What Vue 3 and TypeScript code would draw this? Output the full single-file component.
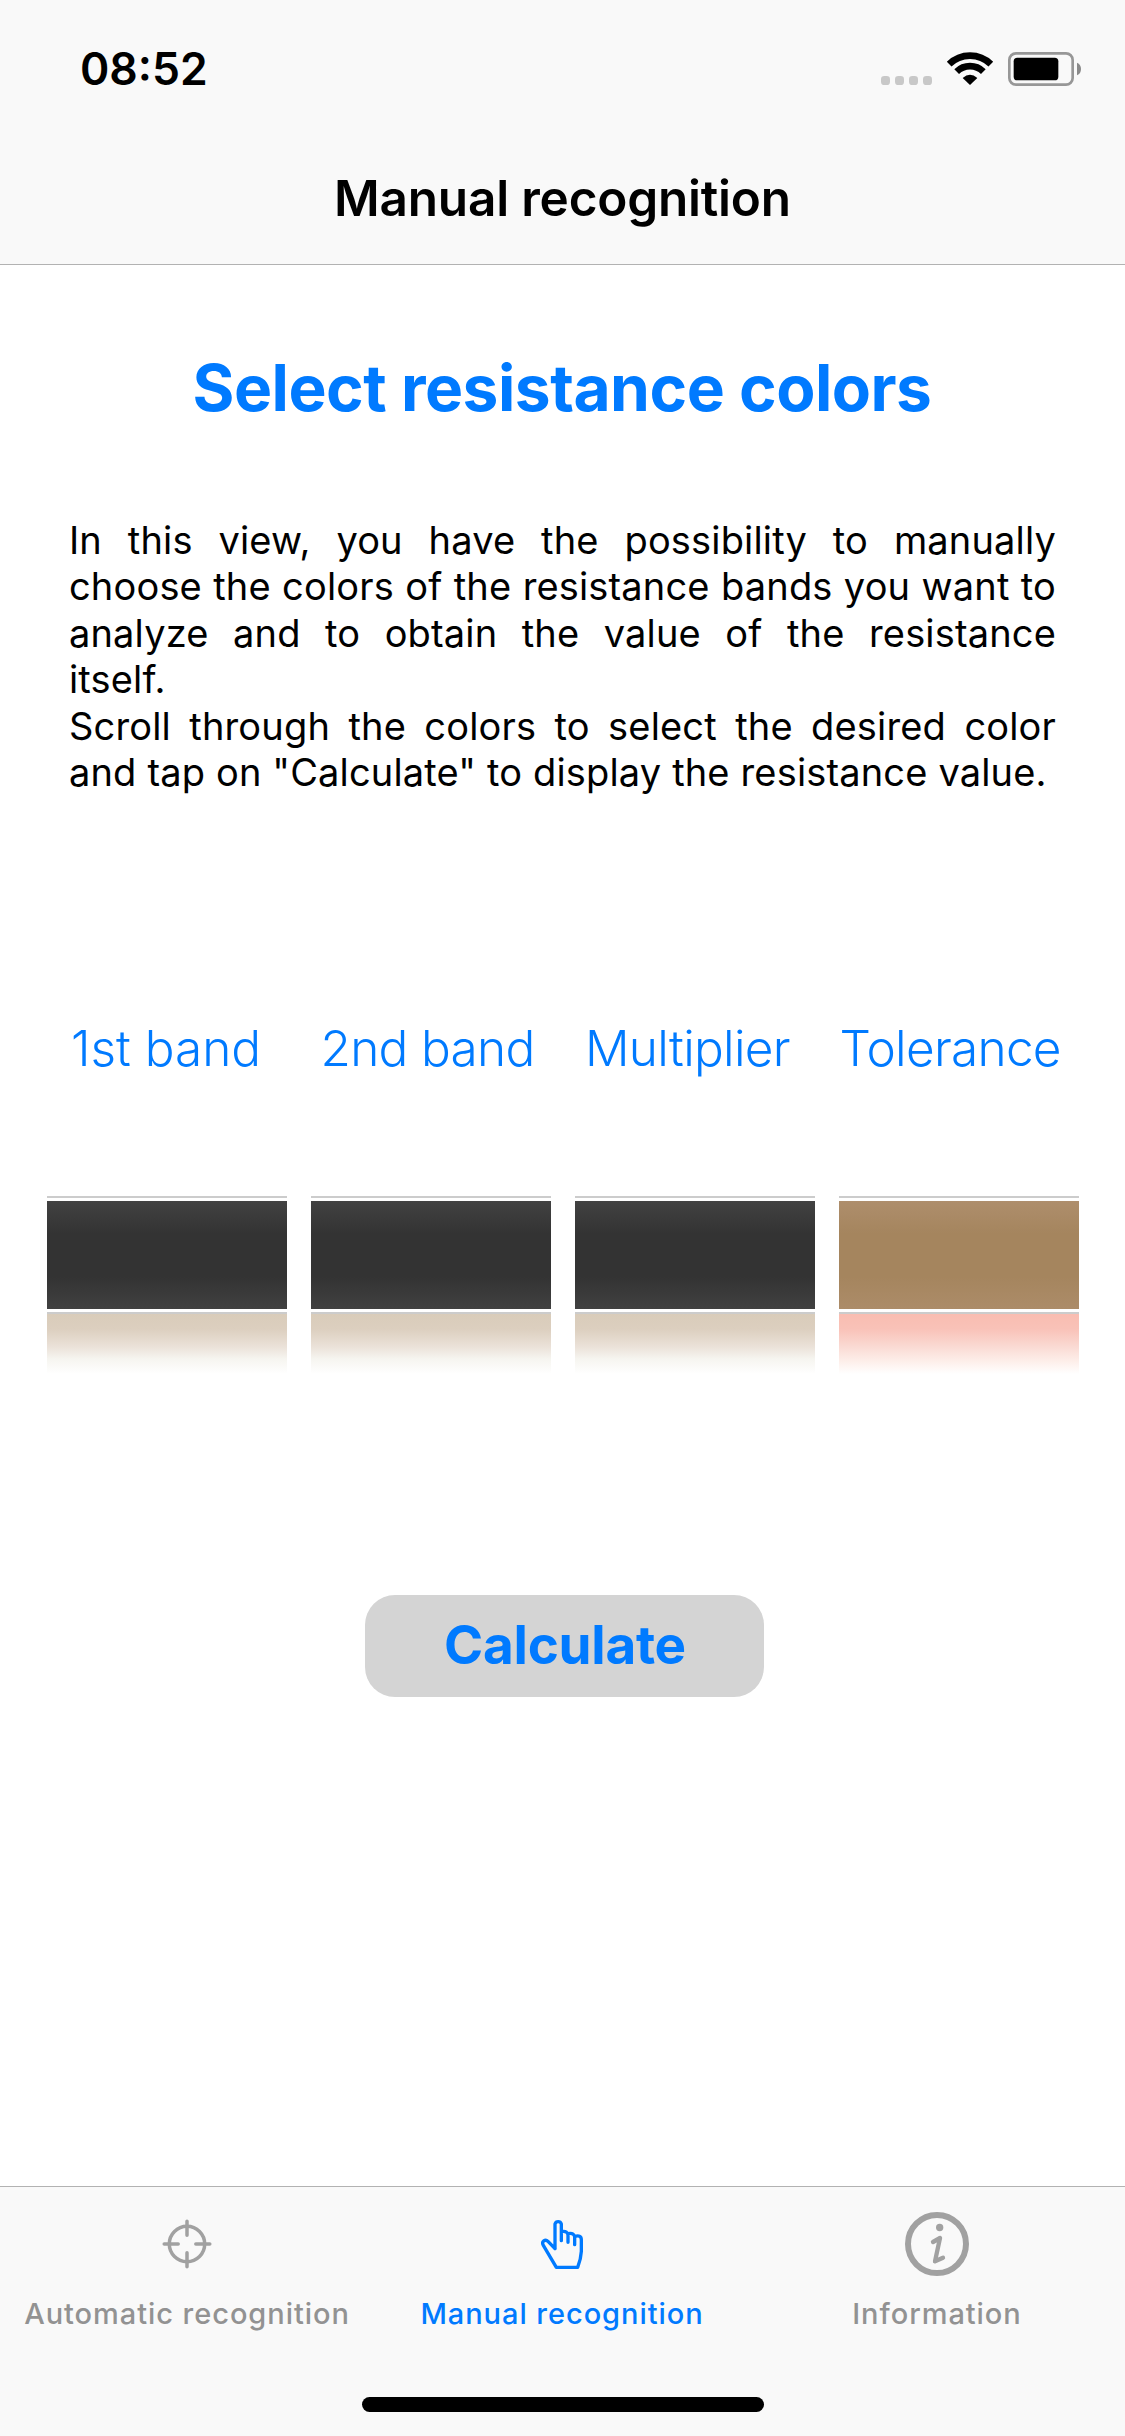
<script setup lang="ts">
interface Picker {
  label: string
  kind: string
}

const pickers: Picker[] = [
  { label: '1st band', kind: 'black' },
  { label: '2nd band', kind: 'black' },
  { label: 'Multiplier', kind: 'black' },
  { label: 'Tolerance', kind: 'brown' },
]
</script>

<template>
  <div class="screen">
    <header class="header">
      <div class="status">
        <span class="time">08:52</span>
        <svg class="indicators" viewBox="60 60 606 114" width="202" height="38">
          <g fill="#c8c8c8">
            <rect x="63" y="138" width="27" height="27" rx="10" />
            <rect x="105" y="138" width="27" height="27" rx="10" />
            <rect x="147" y="138" width="27" height="27" rx="10" />
            <rect x="189" y="138" width="27" height="27" rx="10" />
          </g>
          <g fill="none" stroke="#000" stroke-width="20">
            <path d="M267.5 102.5A89 89 0 0 1 392.5 102.5" />
            <path d="M290 125A57 57 0 0 1 370 125" />
          </g>
          <path d="M330 165L308 144Q330 124 352 144Z" />
          <rect x="448" y="70" width="190" height="94" rx="20" fill="none" stroke="#979797" stroke-width="8" />
          <rect x="461" y="83" width="134" height="68" rx="11" />
          <path d="M651 98Q663 103 663 117T651 136Z" fill="#8a8a8a" />
        </svg>
      </div>
      <h1 class="title">Manual recognition</h1>
    </header>

    <main class="content">
      <h2 class="heading">Select resistance colors</h2>
      <div class="intro">
        <p>In this view, you have the possibility to manually choose the colors of the resistance bands you want to analyze and to obtain the value of the resistance <span class="tail">itself.</span></p>
        <p>Scroll through the colors to select the desired color and tap on "Calculate" to display the resistance value.</p>
      </div>
      <div class="labels">
        <span v-for="(p, i) in pickers" :key="p.label" :class="['label', { tight: i > 0 }]">{{ p.label }}</span>
      </div>
      <div class="pickers">
        <div v-for="p in pickers" :key="p.label" :class="['picker', p.kind]">
          <div class="rule"></div>
          <div class="selected"></div>
          <div class="rule"></div>
          <div class="next"></div>
        </div>
      </div>
      <button class="calculate" type="button">Calculate</button>
    </main>

    <footer class="footer">
      <nav class="tabs">
        <div class="tab">
          <div class="icon">
            <svg width="50" height="50" viewBox="-25 -25 50 50" fill="none" stroke="#a1a1a1" stroke-width="3.5" stroke-linecap="round">
              <circle r="17.7" />
              <path d="M0-22.8V-8.8M0 22.8V8.8M-22.8 0H-8.8M22.8 0H8.8" />
            </svg>
          </div>
          <span>Automatic recognition</span>
        </div>
        <div class="tab active">
          <div class="icon">
            <svg width="42" height="50" viewBox="423 117 126 150" fill="none" stroke="#007aff" stroke-width="10" stroke-linejoin="round" stroke-linecap="round">
              <path d="M465 206V132A10 10 0 0 1 484 132V182M484 155C498 152 504 158 504 166V187M504 161C518 158 524 164 524 172V194M524 170C536 165 544 169 544 179V214Q543 236 533 262H469L430 196C423 184 436 176 444 184L465 206" />
            </svg>
          </div>
          <span>Manual recognition</span>
        </div>
        <div class="tab">
          <div class="icon">
            <svg width="64" height="64" viewBox="255 96 192 192" fill="none" stroke="#a1a1a1" stroke-linecap="round" stroke-linejoin="round">
              <circle cx="351" cy="192" r="87" stroke-width="18" />
              <circle cx="359" cy="142.5" r="11" fill="#a1a1a1" stroke="none" />
              <path d="M339 186L360 174L345 244L369 233" stroke-width="13" />
            </svg>
          </div>
          <span>Information</span>
        </div>
      </nav>
      <div class="home"></div>
    </footer>
  </div>
</template>

<style>
body {
  margin: 0;
  background: #fff;
}
</style>

<style scoped>
.screen {
  width: 1125px;
  height: 2436px;
  display: flex;
  flex-direction: column;
  overflow: hidden;
  background: #fff;
  color: #000;
  font-family: Inter, "Liberation Sans", sans-serif;
}
.header {
  height: 265px;
  box-sizing: border-box;
  background: #f9f9f9;
  border-bottom: 1px solid #b2b2b2;
}
.status {
  height: 132px;
  display: flex;
  justify-content: space-between;
  align-items: flex-start;
  padding: 0 43px 0 80px;
  box-sizing: border-box;
}
.time {
  margin-top: 39px;
  line-height: 60px;
  font-size: 44.5px;
  font-weight: 600;
}
.indicators {
  margin-top: 50px;
}
.title {
  margin: 0;
  line-height: 132px;
  text-align: center;
  font-size: 49.5px;
  font-weight: 600;
  letter-spacing: -0.2px;
}
.content {
  flex: 1;
  display: flex;
  flex-direction: column;
}
.heading {
  margin: 83px 1px 0 0;
  line-height: 80px;
  text-align: center;
  font-size: 64px;
  font-weight: 700;
  letter-spacing: -0.48px;
  color: #007aff;
}
.intro {
  margin: 89px 69px 0;
  height: 279px;
  font-size: 38px;
  line-height: 46.4px;
  letter-spacing: 0.16px;
  text-align: justify;
}
.intro p {
  margin: 0;
}
.tail {
  display: inline-block;
  padding-right: 30px;
}
.labels {
  margin-top: 222px;
  height: 60px;
  padding-left: 71px;
  display: grid;
  grid-template-columns: 249.5px 264.5px 254.5px auto;
  white-space: nowrap;
}
.label {
  line-height: 60px;
  font-size: 49.5px;
  font-weight: 300;
  color: #007aff;
}
.label.tight {
  letter-spacing: -0.7px;
}
.pickers {
  margin: 118px 46px 0 47px;
  display: flex;
  gap: 24px;
}
.picker {
  width: 240px;
}
.rule {
  height: 2px;
  background: #ccc;
}
.selected {
  height: 108px;
  margin: 3px 0;
}
.next {
  height: 60px;
}
.black .selected {
  background: linear-gradient(#424242, #333 30%, #333 70%, #414141);
}
.black .next {
  background: linear-gradient(#d9ccba, #dccfbf 25%, #ebe2d9 55%, #f6f5f0 75%, #fff);
}
.brown .selected {
  background: linear-gradient(#ae8e6c, #a5855e 30%, #a5855e 70%, #ac8c69);
}
.brown .next {
  background: linear-gradient(#f9bdb1, #f9c2b8 25%, #fad8d1 52%, #fdeee9 78%, #fff);
}
.calculate {
  margin: 221px 0 0 365px;
  width: 399px;
  height: 102px;
  padding: 0 0 2px 1px;
  border: 0;
  border-radius: 30px;
  background: #d4d4d4;
  color: #007aff;
  font-family: inherit;
  font-size: 53px;
  font-weight: 700;
  letter-spacing: -0.25px;
}
.footer {
  height: 250px;
  box-sizing: border-box;
  border-top: 1px solid #b2b2b2;
  background: #f9f9f9;
}
.tabs {
  display: flex;
  height: 210px;
}
.tab {
  width: 375px;
  display: flex;
  flex-direction: column;
  align-items: center;
  color: #929292;
  font-size: 29px;
  font-weight: 500;
  line-height: 40px;
  letter-spacing: 0.95px;
}
.tab span {
  margin-right: 1px;
}
.tab.active {
  color: #007aff;
}
.icon {
  height: 64px;
  margin: 25px 1px 17.5px 0;
  display: flex;
  align-items: center;
}
.home {
  width: 402px;
  height: 15px;
  margin: 0 auto;
  border-radius: 8px;
  background: #000;
}
</style>
